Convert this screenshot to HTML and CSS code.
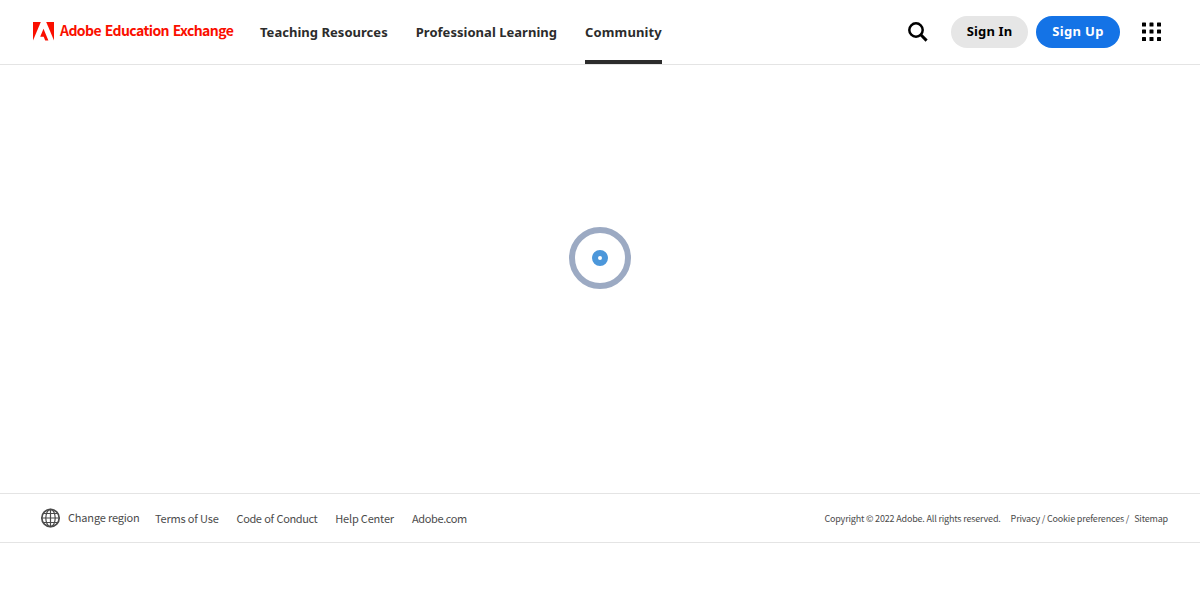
FILE: index.html
```
<!DOCTYPE html>
<html lang="en">
<head>
<meta charset="UTF-8">
<meta name="viewport" content="width=device-width, initial-scale=1.0">
<title>Adobe Education Exchange</title>
<link rel="stylesheet" href="styles.css">
</head>
<body>
    <header class="header">
        <a class="brand" href="#">
            <svg class="brand-logo" width="21" height="19" viewBox="0 0 21 19" fill="#fa0f00">
                <path d="M0 0h7.800L0 18.500z"/>
                <path d="M13.200 0H21v18.500z"/>
                <path d="M10.500 6.800L15.400 18.500h-3.200l-1.500-3.800H7.200z"/>
            </svg>
            <span class="brand-name">Adobe Education Exchange</span>
        </a>
        <nav class="nav">
            <a class="nav-link" href="#">Teaching Resources</a>
            <a class="nav-link" href="#">Professional Learning</a>
            <a class="nav-link active" href="#">Community</a>
        </nav>
        <div class="actions">
            <svg class="search-icon" width="20" height="20" viewBox="0 0 20 20" fill="none" stroke="#000">
                <circle cx="8" cy="8" r="6.700" stroke-width="2.500"/>
                <path d="M12.800 12.800L18.600 18.600" stroke-width="3"/>
            </svg>
            <a class="button sign-in" href="#">Sign In</a>
            <a class="button sign-up" href="#">Sign Up</a>
            <svg class="apps-icon" width="19" height="20" viewBox="0 0 19 20">
                <rect x="0" y="0.500" width="4" height="4" rx="0.600"/>
                <rect x="7.500" y="0.500" width="4" height="4" rx="0.600"/>
                <rect x="15" y="0.500" width="4" height="4" rx="0.600"/>
                <rect x="0" y="7.500" width="4" height="4" rx="0.600"/>
                <rect x="7.500" y="7.500" width="4" height="4" rx="0.600"/>
                <rect x="15" y="7.500" width="4" height="4" rx="0.600"/>
                <rect x="0" y="15" width="4" height="4" rx="0.600"/>
                <rect x="7.500" y="15" width="4" height="4" rx="0.600"/>
                <rect x="15" y="15" width="4" height="4" rx="0.600"/>
            </svg>
        </div>
    </header>

    <main class="content">
        <div class="loader"><div class="loader-dot"></div></div>
    </main>

    <footer class="footer">
        <a class="region" href="#">
            <svg width="21" height="20" viewBox="0 0 21 20" fill="none" stroke="#4b4b4b" stroke-width="1.200">
                <circle cx="10.500" cy="10" r="8.700" stroke-width="1.700"/>
                <ellipse cx="10.500" cy="10" rx="4.700" ry="8.700"/>
                <path d="M10.500 1v18M1.500 10h18M3.300 5.500h14.400M3.300 14.500h14.400"/>
            </svg>
            <span>Change region</span>
        </a>
        <div class="footer-links">
            <a href="#">Terms of Use</a>
            <a class="tight" href="#">Code of Conduct</a>
            <a href="#">Help Center</a>
            <a class="tight" href="#">Adobe.com</a>
        </div>
        <div class="legal">
            <span class="copyright">Copyright © 2022 Adobe. All rights reserved.</span>
            <a class="privacy" href="#">Privacy / Cookie preferences /</a>
            <a href="#">Sitemap</a>
        </div>
    </footer>
</body>
</html>
```
FILE: styles.css
```
body {
    font-family: "Noto Sans CJK SC", "Noto Sans", sans-serif;
    background-color: #fff;
    margin: 0;
    color: #4b4b4b;
}
a {
    color: inherit;
    text-decoration: none;
    white-space: nowrap;
}
svg {
    display: block;
    flex: none;
}

/* Header */
.header {
    display: flex;
    height: 64px;
    border-bottom: 1px solid #e4e4e4;
    padding: 0 39px 0 33px;
}
.brand {
    display: flex;
    align-items: center;
    width: 227px;
    color: #fa0f00;
}
.brand-logo {
    margin: 0 6px 2px 0;
}
.brand-name {
    font-size: 14px;
    font-weight: 700;
    line-height: 20px;
    letter-spacing: -0.58px;
    word-spacing: 1.1px;
    padding-bottom: 4px;
}
.nav {
    display: flex;
    gap: 28px;
    font-family: "Noto Sans", sans-serif;
    font-size: 13px;
    font-weight: 700;
    letter-spacing: 0.03px;
    color: #2c2c2c;
}
.nav-link {
    line-height: 64px;
    height: 60px;
}
.nav-link.active {
    letter-spacing: 0.12px;
    border-bottom: 4px solid #2c2c2c;
}
.actions {
    display: flex;
    align-items: center;
    margin-left: auto;
    font-family: "Noto Sans", sans-serif;
}
.search-icon {
    margin-right: 23px;
}
.button {
    box-sizing: border-box;
    height: 32px;
    border-radius: 16px;
    font-size: 13px;
    font-weight: 700;
    line-height: 31px;
    text-align: center;
}
.sign-in {
    width: 77px;
    margin-right: 8px;
    background-color: #e6e6e6;
    color: #000;
    letter-spacing: 0.14px;
}
.sign-up {
    width: 84px;
    margin-right: 22px;
    background-color: #1473e6;
    color: #fff;
    letter-spacing: 0.35px;
}

/* Loader */
.content {
    display: flex;
    justify-content: center;
    height: 428px;
}
.loader {
    display: flex;
    align-items: center;
    justify-content: center;
    box-sizing: border-box;
    width: 62px;
    height: 62px;
    margin-top: 162px;
    border: 6px solid #9caac3;
    border-radius: 50%;
}
.loader-dot {
    width: 4px;
    height: 4px;
    border: 6px solid #4c97da;
    border-radius: 50%;
}

/* Footer */
.footer {
    display: flex;
    align-items: center;
    height: 48px;
    border-top: 1px solid #e4e4e4;
    border-bottom: 1px solid #e4e4e4;
    padding: 0 32px 0 40px;
    font-size: 11px;
    line-height: 18px;
    letter-spacing: -0.18px;
}
.region {
    display: flex;
    align-items: center;
    gap: 7px;
    width: 115px;
    padding-bottom: 1px;
}
.region span {
    padding-bottom: 1px;
}
.footer-links {
    display: flex;
    gap: 18px;
    padding-bottom: 1px;
}
.footer-links .tight {
    letter-spacing: -0.42px;
    word-spacing: 0.8px;
}
.footer-links .tight:last-child {
    letter-spacing: -0.36px;
}
.legal {
    display: flex;
    margin-left: auto;
    padding-top: 2px;
    font-size: 9px;
    white-space: nowrap;
}
.copyright {
    margin-right: 10px;
}
.privacy {
    margin-right: 5px;
}
```
